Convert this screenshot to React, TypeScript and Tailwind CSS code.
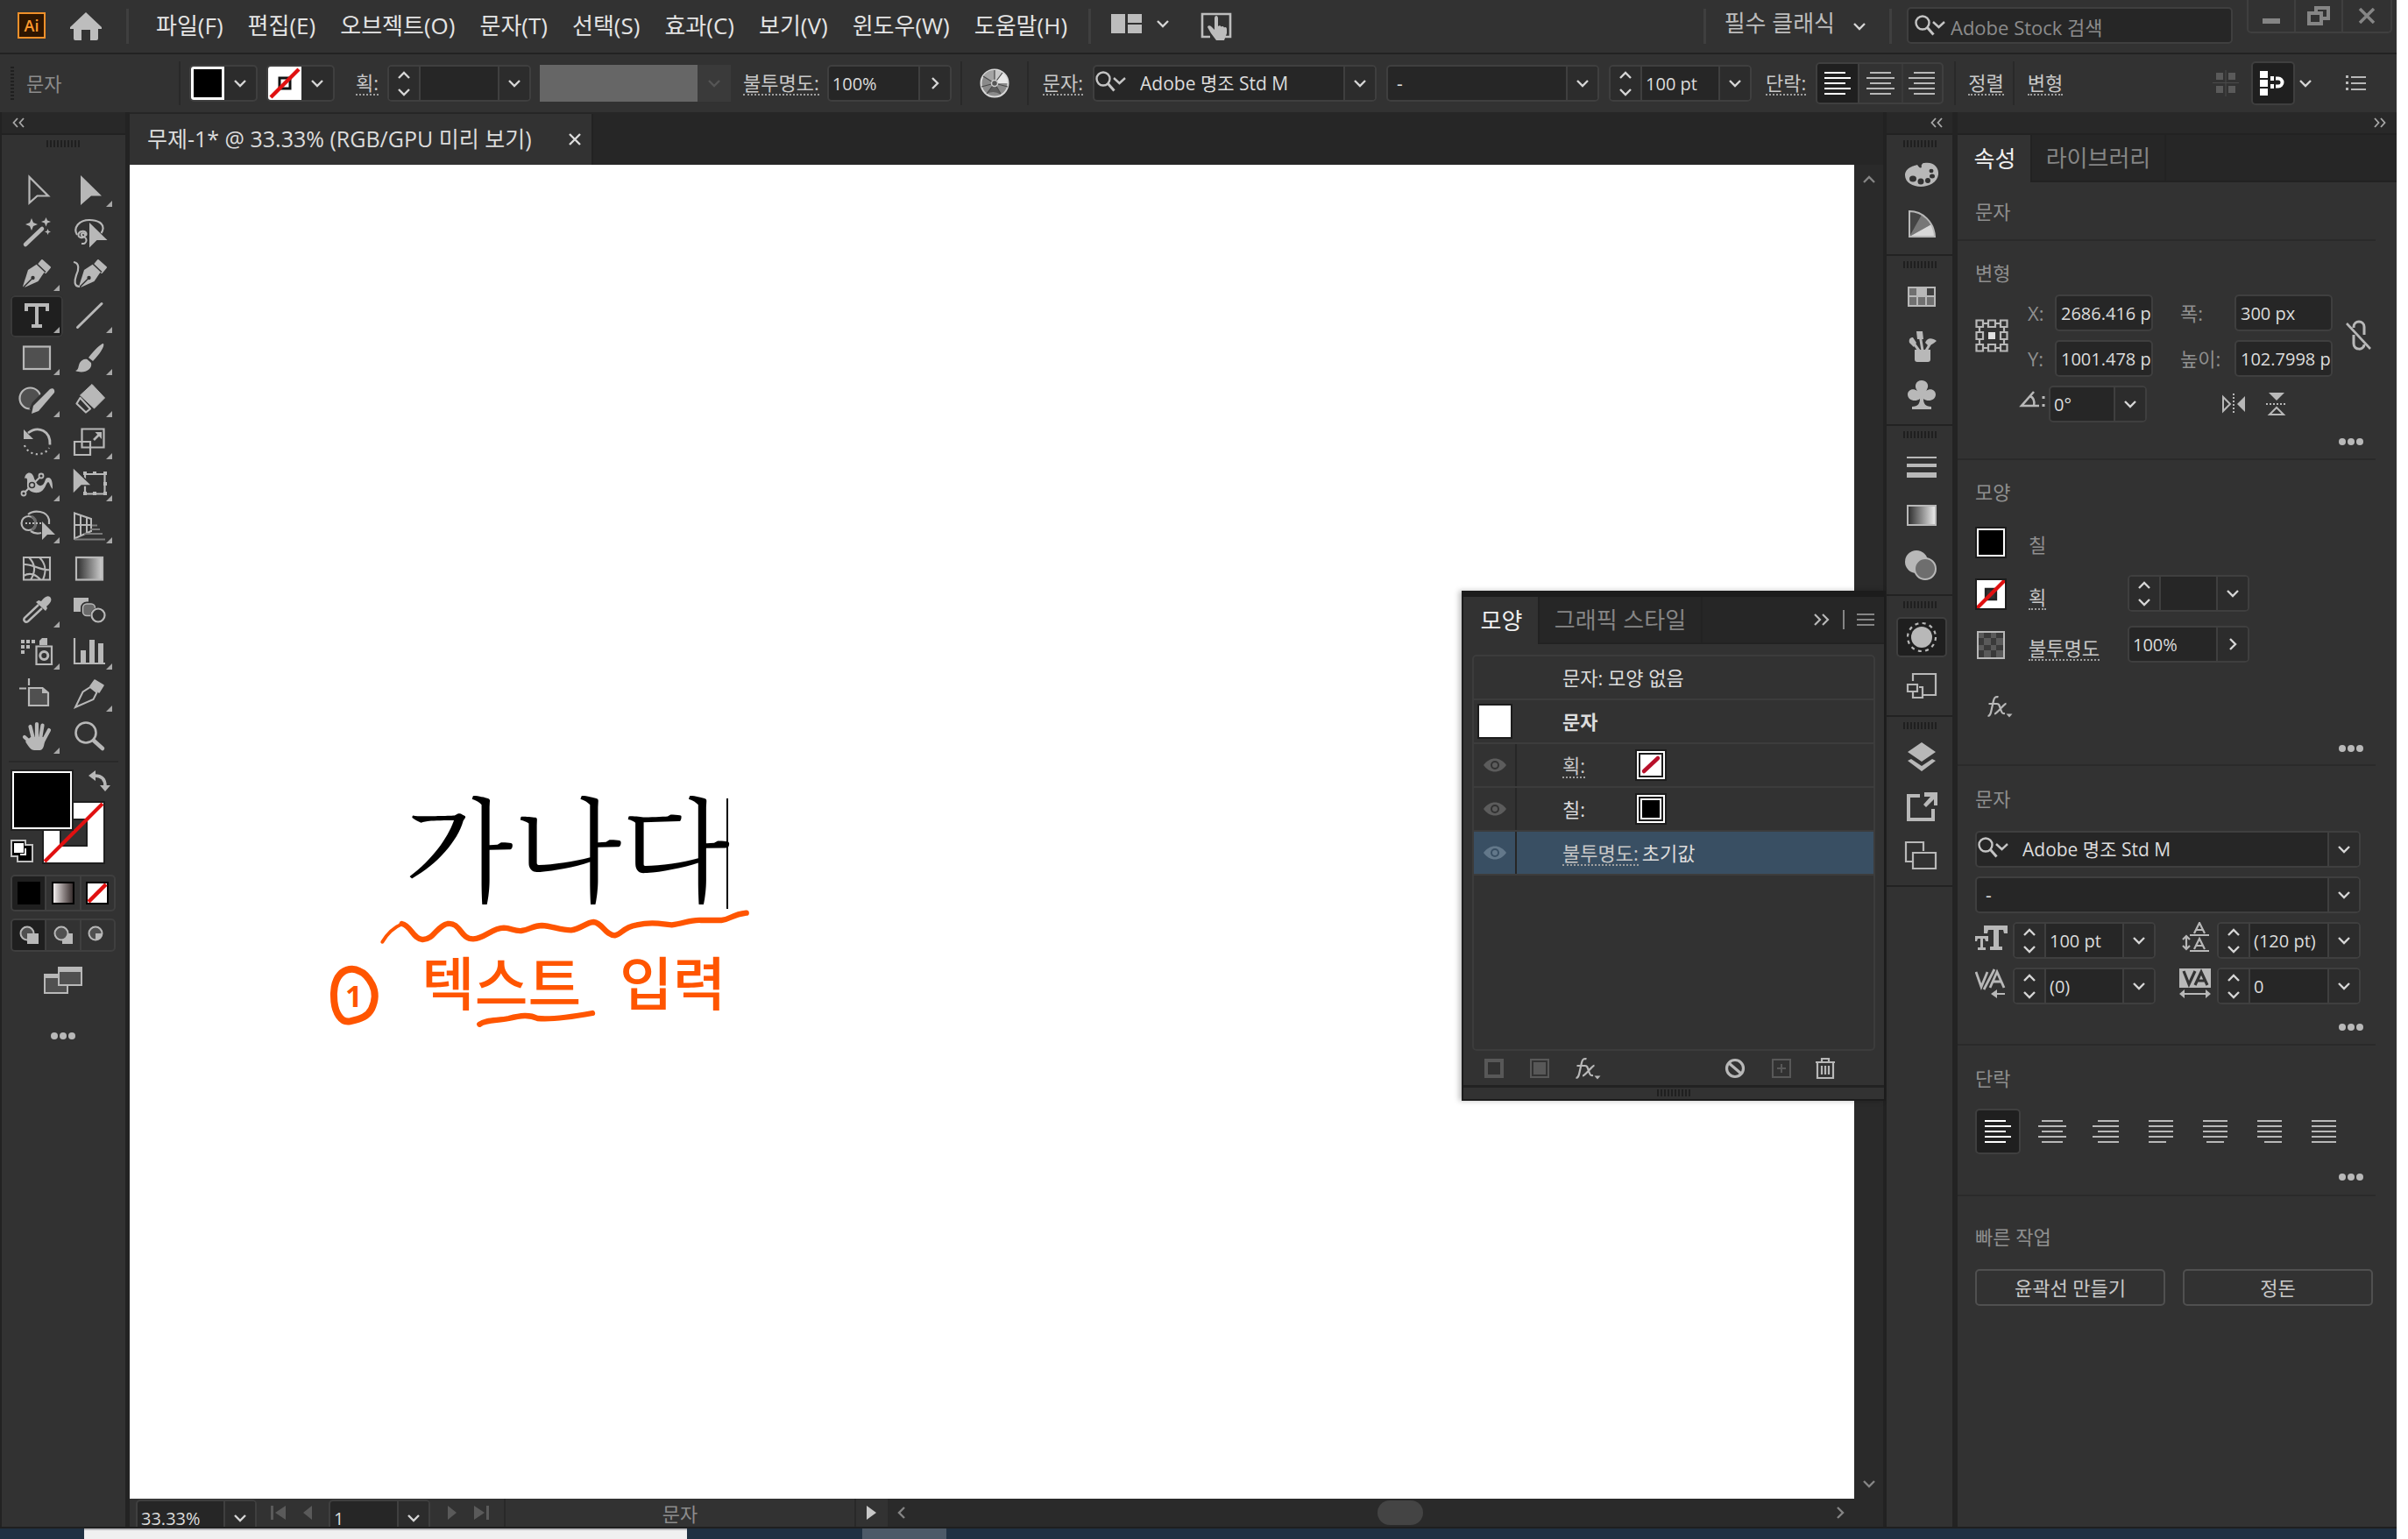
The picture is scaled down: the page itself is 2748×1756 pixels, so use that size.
import React from "react";

const I = "#b8b8b8";

/* ---------- small drawings ---------- */

function Chevron({ dir = "down", color = "#d6d6d6", size = 16 }: { dir?: "down" | "up" | "right" | "left"; color?: string; size?: number }) {
  const d = {
    down: "M2 5l6 6 6-6",
    up: "M2 11l6-6 6 6",
    right: "M5 2l6 6-6 6",
    left: "M11 2l-6 6 6 6",
  }[dir];
  return (
    <svg width={size} height={size} viewBox="0 0 16 16" fill="none" stroke={color} strokeWidth="2.4" aria-hidden="true">
      <path d={d} />
    </svg>
  );
}

function DoubleChevron({ dir }: { dir: "left" | "right" }) {
  return (
    <svg width="14" height="12" viewBox="0 0 14 12" fill="none" stroke="#a8a8a8" strokeWidth="1.8" aria-hidden="true">
      <path d={dir === "left" ? "M6 1L1.500 6 6 11M13 1L8.500 6 13 11" : "M1 1l4.500 5L1 11M8 1l4.500 5L8 11"} />
    </svg>
  );
}

function Grip() {
  return <div className="h-2 w-[38px] bg-[repeating-linear-gradient(90deg,#1f1f1f_0_2px,#323232_2px_4px)]" />;
}

function SearchGlyph() {
  return (
    <svg width="38" height="26" viewBox="0 0 38 26" fill="none" stroke="#c4c4c4" strokeWidth="2.4" aria-hidden="true">
      <circle cx="10" cy="10" r="7.500" />
      <path d="M15.500 15.500l7 8" strokeWidth="3" />
      <path d="M22 9l6.500 6 6.500-6" />
    </svg>
  );
}

function Dots() {
  return (
    <svg width="30" height="10" viewBox="0 0 30 10" fill={I} aria-hidden="true">
      <circle cx="5" cy="5" r="4" />
      <circle cx="15" cy="5" r="4" />
      <circle cx="25" cy="5" r="4" />
    </svg>
  );
}

function FxIcon() {
  return (
    <svg width="32" height="28" viewBox="0 0 32 28" fill="none" stroke={I} strokeWidth="2.2" aria-hidden="true">
      <path d="M2.500 25c2.500 0 3-2 3.800-5.500L9 7.500C9.800 4 11 2.500 14.500 3.200M3.500 11h9.500" />
      <path d="M12.500 11c3 0 3 1.500 4.500 6s2 5.500 5 5M23.500 10.800c-3 0-10 11.700-13.500 11.700" />
      <path d="M23.500 22.500h7l-3.500 4z" fill={I} stroke="none" />
    </svg>
  );
}

function NoneSwatch() {
  return (
    <svg width="38" height="38" viewBox="0 0 38 38" aria-hidden="true">
      <path d="M0 0h38v38H0z" fill="#fff" />
      <path d="M13 13h12v12H13z" fill="#fff" stroke="#111" strokeWidth="3" />
      <path d="M3 35L35 3" stroke="#e01010" strokeWidth="4.500" />
    </svg>
  );
}

type AlignKind = "left" | "center" | "right" | "jleft" | "jcenter" | "jright" | "jall";
const alignLines: Record<AlignKind, number[][]> = {
  left: [[1, 24], [1, 30], [1, 24], [1, 30], [1, 24]],
  center: [[4, 24], [0, 32], [4, 24], [0, 32], [4, 24]],
  right: [[6, 24], [0, 30], [6, 24], [0, 30], [6, 24]],
  jleft: [[2, 28], [2, 28], [2, 28], [2, 28], [2, 20]],
  jcenter: [[2, 28], [2, 28], [2, 28], [2, 28], [6, 20]],
  jright: [[2, 28], [2, 28], [2, 28], [2, 28], [10, 20]],
  jall: [[2, 28], [2, 28], [2, 28], [2, 28], [2, 28]],
};
function AlignIcon({ kind, color = I }: { kind: AlignKind; color?: string }) {
  return (
    <svg width="32" height="28" viewBox="0 0 32 28" fill={color} aria-hidden="true">
      {alignLines[kind].map(([x, w], i) => (
        <rect key={i} x={x} y={1 + i * 6} width={w} height="2" />
      ))}
    </svg>
  );
}

/* ---------- shared controls ---------- */

const boxBase = "flex h-[42px] overflow-hidden rounded-[5px] border-2 border-[#3f3f3f] bg-[#262626]";
const cell = "flex w-[36px] shrink-0 items-center justify-center bg-[#2c2c2c]";

function Combo({ label, value = "", width, stepper = false, arrow = "down" }: { label: string; value?: string; width: string; stepper?: boolean; arrow?: "down" | "right" }) {
  return (
    <div className={`${boxBase} ${width}`}>
      {stepper && (
        <div className="flex w-[36px] shrink-0 flex-col border-r-2 border-[#3f3f3f] bg-[#2c2c2c]">
          <button aria-label={`${label} +`} className="flex flex-1 items-center justify-center">
            <Chevron dir="up" />
          </button>
          <button aria-label={`${label} -`} className="flex flex-1 items-center justify-center">
            <Chevron />
          </button>
        </div>
      )}
      <input aria-label={label} defaultValue={value} className="min-w-0 flex-1 bg-transparent px-1 pt-0.5 text-[20px] text-[#dcdcdc] outline-none" />
      <button aria-label={`${label} ▾`} className={`${cell} border-l-2 border-[#3f3f3f]`}>
        <Chevron dir={arrow} />
      </button>
    </div>
  );
}

function SelectBox({ label, value, width, search = false }: { label: string; value: string; width: string; search?: boolean }) {
  return (
    <div className={`relative ${boxBase} ${width}`}>
      {search && (
        <div className="flex w-[42px] shrink-0 items-center pb-1">
          <SearchGlyph />
        </div>
      )}
      <select aria-label={label} className="min-w-0 flex-1 appearance-none bg-transparent pl-2.5 pt-0.5 text-[21px] text-[#dcdcdc] outline-none">
        <option>{value}</option>
      </select>
      <div className={`${cell} pointer-events-none border-l-2 border-[#3f3f3f]`}>
        <Chevron />
      </div>
    </div>
  );
}

function LinkLabel({ children }: { children: React.ReactNode }) {
  return <button className="shrink-0 border-b-2 border-dotted border-[#a0a0a0] text-[22px] leading-[26px] text-[#c8c8c8]">{children}</button>;
}

const VLine = ({ className = "" }: { className?: string }) => <div className={`h-[50px] w-[2px] shrink-0 bg-[#292929] ${className}`} />;

/* ---------- menu bar ---------- */

const menus = ["파일(F)", "편집(E)", "오브젝트(O)", "문자(T)", "선택(S)", "효과(C)", "보기(V)", "윈도우(W)", "도움말(H)"];

function MenuBar() {
  return (
    <header className="flex h-[62px] shrink-0 border-b-2 border-[#222] pl-5 text-[26px]">
      <div className="mt-[14px] flex h-[30px] w-8 items-center justify-center border-2 border-[#f0902a] bg-[#2e1500] text-[18px] font-semibold text-[#ff9a2e]">Ai</div>
      <button aria-label="홈" className="ml-7 flex h-[60px] items-center">
        <svg width="36" height="32" viewBox="0 0 36 32" fill="#bdbdbd" aria-hidden="true">
          <path d="M18 0L0 17v2h4v11a2 2 0 002 2h7V20h10v12h7a2 2 0 002-2V19h4v-2z" />
        </svg>
      </button>
      <div className="ml-7 mt-2.5 h-10 w-[3px] bg-[#3f3f3f]" />
      <nav className="ml-[31px] flex items-center gap-[28px] pb-0.5 text-[#e4e4e4]">
        {menus.map((m) => (
          <button key={m} className="whitespace-nowrap">{m}</button>
        ))}
      </nav>
      <div className="ml-6 mt-2.5 h-10 w-[3px] bg-[#3f3f3f]" />
      <button aria-label="문서 정렬" className="ml-[23px] flex h-[54px] items-center gap-4">
        <svg width="35" height="22" viewBox="0 0 35 22" fill="#bdbdbd" aria-hidden="true">
          <path d="M0 0h16v22H0zM19 0h16v10H19zM19 12h16v10H19z" />
        </svg>
        <Chevron />
      </button>
      <button aria-label="터치 작업 영역" className="ml-[34px] flex h-[60px] items-center">
        <svg width="38" height="32" viewBox="0 0 38 32" aria-hidden="true">
          <path d="M12 28H3V2h32v26h-7" fill="none" stroke="#bdbdbd" strokeWidth="2.600" />
          <path d="M17 7c0-4 4-4 4 0v9c1-1 3-1 3.500.5 1.500-1 3-.5 3.500 1 2-1 3 0 3 2V24l-3 8h-9l-6-8-4-7c0-2 3-2 4-1l4 4z" fill="#bdbdbd" />
        </svg>
      </button>
      <div className="flex-1" />
      <div className="mt-2.5 h-10 w-[3px] bg-[#3f3f3f]" />
      <button className="ml-[21px] flex h-[52px] items-center gap-5 text-[26px] text-[#bdbdbd]">
        필수 클래식
        <span className="pt-2"><Chevron /></span>
      </button>
      <div className="ml-[26px] mt-2.5 h-10 w-[3px] bg-[#3f3f3f]" />
      <label className="ml-[17px] mt-2 flex h-[42px] w-[372px] items-center rounded-[5px] border-2 border-[#3f3f3f] bg-[#262626] pl-1.5">
        <SearchGlyph />
        <input aria-label="Adobe Stock 검색" placeholder="Adobe Stock 검색" className="min-w-0 flex-1 bg-transparent pl-1 pt-1 text-[22px] outline-none placeholder:text-[#8c8c8c]" />
      </label>
      <div className="ml-4 mr-[5px] flex h-[38px] rounded-b-[5px] border-2 border-t-0 border-[#3f3f3f]">
        <button aria-label="최소화" className="flex w-[54px] items-center justify-center border-r-2 border-[#3f3f3f] pt-3">
          <div className="h-[6px] w-5 bg-[#858585]" />
        </button>
        <button aria-label="복원" className="flex w-[54px] items-center justify-center border-r-2 border-[#3f3f3f]">
          <svg width="26" height="22" viewBox="0 0 26 22" fill="none" stroke="#858585" strokeWidth="4" aria-hidden="true">
            <path d="M10 6V2h14v12h-6M2 8h14v12H2z" />
          </svg>
        </button>
        <button aria-label="닫기" className="flex w-[54px] items-center justify-center">
          <svg width="20" height="18" viewBox="0 0 20 18" stroke="#858585" strokeWidth="3.500" aria-hidden="true">
            <path d="M2 1l16 16M18 1L2 17" />
          </svg>
        </button>
      </div>
    </header>
  );
}

/* ---------- control bar ---------- */

function ControlBar() {
  const dd = "flex w-[36px] items-center justify-center";
  return (
    <div className="flex h-[66px] shrink-0 items-center pl-3">
      <div className="h-[38px] w-1 bg-[repeating-linear-gradient(180deg,#1f1f1f_0_2px,#323232_2px_4px)]" />
      <span className="ml-[14px] w-[174px] shrink-0 text-[22px] text-[#8c8c8c]">문자</span>
      <VLine />
      <button aria-label="칠" className="ml-2.5 flex h-[42px] w-[78px] shrink-0 overflow-hidden rounded-[5px] border-2 border-[#3f3f3f] bg-[#2c2c2c]">
        <div className="h-full w-[38px] border-[3px] border-white bg-black" />
        <span className={dd + " h-full"}><Chevron /></span>
      </button>
      <button aria-label="획" className="ml-2.5 flex h-[42px] w-[78px] shrink-0 overflow-hidden rounded-[5px] border-2 border-[#3f3f3f] bg-[#2c2c2c]">
        <NoneSwatch />
        <span className={dd + " h-full"}><Chevron /></span>
      </button>
      <div className="ml-6 flex items-center gap-[10px]">
        <LinkLabel>획:</LinkLabel>
        <Combo label="획 두께" width="w-[164px]" stepper />
      </div>
      <div className="ml-2.5 h-[42px] w-[180px] shrink-0 bg-[#666]" />
      <div className="mr-[14px] flex h-[42px] w-[38px] shrink-0 items-center justify-center bg-[#3a3a3a]">
        <Chevron color="#555" />
      </div>
      <div className="flex items-center gap-[9px]">
        <LinkLabel>불투명도:</LinkLabel>
        <Combo label="불투명도" value="100%" width="w-[142px]" arrow="right" />
      </div>
      <VLine className="ml-2.5" />
      <button aria-label="아트웍 색상 변경" className="mx-5 shrink-0">
        <svg width="34" height="34" viewBox="0 0 34 34" aria-hidden="true">
          <circle cx="17" cy="17" r="15.500" fill="#8a8a8a" stroke="#d8d8d8" strokeWidth="2" />
          <path d="M17 17V2a15 15 0 019 3z" fill="#c8c8c8" />
          <path d="M17 17l9-12a15 15 0 016 12z" fill="#e6e6e6" />
          <path d="M17 17L4 9A15 15 0 0117 2z" fill="#a4a4a4" />
          <path d="M17 17L24 30A15 15 0 008 29z" fill="#5c5c5c" />
          <path d="M17 2v15L8 29M17 17l7 12M17 17L4 9M17 17l15 4M17 17L2 21M17 17l9-12" stroke="#4a4a4a" strokeWidth="1.200" fill="none" />
          <circle cx="17" cy="17" r="3.500" fill="#555" stroke="#ccc" strokeWidth="1.500" />
        </svg>
      </button>
      <VLine />
      <div className="ml-4 flex items-center gap-[11px]">
        <LinkLabel>문자:</LinkLabel>
        <SelectBox label="글꼴" value="Adobe 명조 Std M" width="w-[324px]" search />
        <SelectBox label="글꼴 스타일" value="-" width="w-[243px]" />
        <Combo label="글꼴 크기" value="100 pt" width="w-[163px]" stepper />
      </div>
      <div className="ml-4 flex items-center gap-[11px]">
        <LinkLabel>단락:</LinkLabel>
        <div className="flex h-[48px] overflow-hidden rounded-[5px] border-2 border-[#3f3f3f]">
          <button aria-label="왼쪽 정렬" className="flex w-12 items-center justify-center border-r-2 border-[#3f3f3f] bg-[#1f1f1f]"><AlignIcon kind="left" color="#fff" /></button>
          <button aria-label="가운데 정렬" className="flex w-[50px] items-center justify-center border-r-2 border-[#3a3a3a]"><AlignIcon kind="center" /></button>
          <button aria-label="오른쪽 정렬" className="flex w-11 items-center justify-center"><AlignIcon kind="right" /></button>
        </div>
      </div>
      <VLine className="ml-3 mr-[14px]" />
      <LinkLabel>정렬</LinkLabel>
      <VLine className="ml-2.5 mr-[15px]" />
      <LinkLabel>변형</LinkLabel>
      <div className="flex-1" />
      <svg width="30" height="30" viewBox="0 0 30 30" fill="#5a5a5a" aria-hidden="true">
        <path d="M4 3h8v8H4zM18 3h8v8h-8zM4 18h8v8H4zM18 18h8v8h-8z" />
        <path d="M14.500 0h1v30h-1zM0 14h30v1H0z" fill="#4a4a4a" />
      </svg>
      <button aria-label="픽셀에 정렬" className="ml-[14px] flex h-[50px] w-[50px] items-center justify-center rounded-[5px] border-2 border-[#3f3f3f] bg-[#1f1f1f]">
        <svg width="30" height="30" viewBox="0 0 30 30" fill="#fff" aria-hidden="true">
          <path d="M0 1h9v8H0zM0 11h9v8H0zM0 21h9v8H0zM12 7h4v5h-4zM12 16h4v5h-4z" />
          <path d="M18 9.500h3a4.500 4.500 0 010 9h-3" fill="none" stroke="#fff" strokeWidth="4" />
        </svg>
      </button>
      <button aria-label="픽셀 정렬 옵션" className="ml-1"><Chevron /></button>
      <button aria-label="패널 메뉴" className="ml-[38px] mr-[34px]">
        <svg width="24" height="18" viewBox="0 0 24 18" fill={I} aria-hidden="true">
          <path d="M0 0h3v3H0zM0 7h3v3H0zM0 14h3v3H0zM6 1h17v2H6zM6 8h17v2H6zM6 15h17v2H6z" />
        </svg>
      </button>
    </div>
  );
}

/* ---------- tools ---------- */

const penBody = (
  <>
    <path d="M14 38l6-19 10-6.500L39 21l-7.500 11L17 38.500z" fill={I} />
    <path d="M36 8l9 8-5 6-9-8z" fill={I} stroke={I} strokeWidth="2" strokeLinejoin="round" />
    <path d="M30 12l10 9.500" stroke="#323232" strokeWidth="1.600" />
    <path d="M15 38.500l9-9" stroke="#323232" strokeWidth="1.600" />
    <circle cx="25.500" cy="28" r="2.200" fill="#323232" />
  </>
);

const tools: { name: string; tri?: boolean; on?: boolean; art: React.ReactNode }[] = [
  { name: "선택", art: <path d="M21.500 9v29.500l9-8H43z" fill="none" stroke={I} strokeWidth="2.200" /> },
  { name: "직접 선택", tri: true, art: <path d="M20 7v34l12-10.500h12z" fill={I} /> },
  {
    name: "자동 선택",
    art: (
      <>
        <path d="M17 38l19-18" stroke={I} strokeWidth="4.500" strokeLinecap="round" />
        <path d="M24 8l2 5 5 2-5 2-2 5-2-5-5-2 5-2zM40.500 7l1.500 3.500 4 1.500-4 1.500-1.500 4-1.500-4-4-1.500 4-1.500zM42.500 20l1 2.500 2.500 1-2.500 1-1 2.500-1-2.500-2.500-1 2.500-1z" fill={I} />
      </>
    ),
  },
  {
    name: "올가미",
    art: (
      <>
        <path d="M16 27c-5-8 2-17 14-17 10 0 16 4 15.500 10-.2 2-.8 3.500-2 5" fill="none" stroke={I} strokeWidth="2.200" />
        <path d="M26 28c2-4-2-6-5-5-4 1-5 6-1 7 5 1 7-4 3-5-3 0-3 3 0 4 5 1 5 9-2 8" fill="none" stroke={I} strokeWidth="2" />
        <path d="M30 13v28.500l8.500-8.500h12z" fill={I} />
      </>
    ),
  },
  { name: "펜", tri: true, art: penBody },
  {
    name: "곡률",
    art: (
      <>
        <g transform="translate(4 0)">{penBody}</g>
        <path d="M12 10c7 1 6 9 3 15-2 6-3 13 4 13" fill="none" stroke={I} strokeWidth="2.200" />
      </>
    ),
  },
  {
    name: "문자",
    tri: true,
    on: true,
    art: <path d="M16 9h28v9h-4v-5h-8v20h4v4H24v-4h4V13h-8v5h-4z" fill={I} />,
  },
  { name: "선분", tri: true, art: <path d="M16.500 36.500L44 9.500" stroke={I} strokeWidth="3" strokeLinecap="round" /> },
  { name: "사각형", tri: true, art: <rect x="15" y="10.500" width="30" height="25.500" fill="#505050" stroke={I} strokeWidth="2.200" /> },
  {
    name: "페인트브러쉬",
    tri: true,
    art: <path d="M46 7c2 3-5 13-12 20l-5-4C35 15 43 7 46 7zM27.500 25l4.500 4c2 8-9 13-18 9 4-1 3-5 5-9 2-3 5-5 8.500-4z" fill={I} />,
  },
  {
    name: "Shaper",
    tri: true,
    art: (
      <>
        <circle cx="22.500" cy="21.500" r="12" fill="#505050" stroke={I} strokeWidth="2.200" />
        <path d="M47 11L29 29l-3 7" stroke="#323232" strokeWidth="10" fill="none" />
        <path d="M45 11c3-2 6 0 5 4L32 36l-8 3 2-9z" fill={I} />
      </>
    ),
  },
  {
    name: "지우개",
    tri: true,
    art: (
      <>
        <path d="M33 5.500l14.500 15.500-12 12L19.500 18z" fill={I} stroke={I} strokeLinejoin="round" />
        <path d="M19.500 21l-4 6.500L26 37.500l5-4z" fill="none" stroke={I} strokeWidth="2.200" strokeLinejoin="round" />
      </>
    ),
  },
  {
    name: "회전",
    tri: true,
    art: (
      <>
        <path d="M20 13c12-9 26-2 25 13.500" fill="none" stroke={I} strokeWidth="2.800" />
        <path d="M15 9v11h11z" fill={I} />
        <path d="M16 27c4 12 22 14 28 3" fill="none" stroke={I} strokeWidth="2.200" strokeDasharray="2.200 3.500" />
      </>
    ),
  },
  {
    name: "크기 조절",
    tri: true,
    art: (
      <>
        <path d="M21.500 8.500h25v21h-25zM13 23h18v15H13z" fill="none" stroke={I} strokeWidth="2.200" />
        <path d="M35 21l7-7" stroke={I} strokeWidth="2.600" />
        <path d="M36.500 12H44v8z" fill={I} />
      </>
    ),
  },
  {
    name: "폭",
    tri: true,
    art: (
      <>
        <path d="M16 17c1-8 9-9 11 0 3 7 6 10 10 7 3-3 2-8 6-8 5 0 5 8 5 13-3-3-3-7-5-8-3 1-3 10-11 12-7 1-14-3-13-9 0-4 1-9-3-7z" fill={I} />
        <path d="M15 34l20-20" stroke={I} strokeWidth="2.200" />
        <circle cx="15" cy="34" r="2.500" fill="#323232" stroke={I} strokeWidth="1.800" />
        <circle cx="35" cy="14" r="2.500" fill="#323232" stroke={I} strokeWidth="1.800" />
        <circle cx="24.500" cy="24.500" r="3" fill={I} stroke="#323232" strokeWidth="1.500" />
      </>
    ),
  },
  {
    name: "자유 변형",
    tri: true,
    art: (
      <>
        <path d="M25 12h22.500v22.500H25z" fill="none" stroke={I} strokeWidth="2.200" />
        <path d="M23 9h4v4h-4zM34 9h4v4h-4zM46 9h4v4h-4zM46 21h4v4h-4zM46 32h4v4h-4zM34 32h4v4h-4zM23 32h4v4h-4z" fill={I} />
        <path d="M11 4v31l10-10h12z" fill={I} stroke="#323232" strokeWidth="1.500" />
      </>
    ),
  },
  {
    name: "도형 구성",
    tri: true,
    art: (
      <>
        <circle cx="20.500" cy="20" r="8" fill="none" stroke={I} strokeWidth="2.200" />
        <path d="M20 10c7-6 22-4 24 6v5M23 29c4 3 8 3 12 2" fill="none" stroke={I} strokeWidth="2.200" />
        <path d="M24 12a9 9 0 010 16" fill="none" stroke="#6a6a6a" strokeWidth="3" />
        <path d="M17 20h18" stroke={I} strokeWidth="2" strokeDasharray="2 2" />
        <path d="M36 18v21l6-6h9z" fill={I} />
      </>
    ),
  },
  {
    name: "원근감 격자",
    tri: true,
    art: (
      <>
        <path d="M13 8.500L32 15v14L13 37.500zM13 22h19M20 11v23M27 13.500v18" fill="none" stroke={I} strokeWidth="2" />
        <path d="M33 22.500h6M31 27h11M24 32h21M13 38.500h35" stroke="#7a7a7a" strokeWidth="2" />
      </>
    ),
  },
  {
    name: "망",
    art: (
      <path d="M15 11h30v25.500H15zM15 19c10-1 20 8 30 6M15 32c8-5 14-1 19 4M21 11c8 8 8 16 2 25.500M33 11c8 8 8 16 4 25.500" fill="none" stroke={I} strokeWidth="2.100" />
    ),
  },
  {
    name: "그레이디언트",
    art: (
      <>
        <defs>
          <linearGradient id="toolGrad">
            <stop offset="0" stopColor="#2a2a2a" />
            <stop offset="1" stopColor="#d0d0d0" />
          </linearGradient>
        </defs>
        <rect x="15" y="11" width="30" height="25.500" fill="url(#toolGrad)" stroke={I} strokeWidth="2.200" />
      </>
    ),
  },
  {
    name: "스포이드",
    tri: true,
    art: (
      <>
        <path d="M32 17L16 32c-2 3 1 6 4 4l16-15" fill="none" stroke={I} strokeWidth="2.400" />
        <path d="M29 14l3-2 3 1c4-5 7-7 10-5 3 3 1 7-4 11l1 2-2 3z" fill={I} />
      </>
    ),
  },
  {
    name: "블렌드",
    art: (
      <>
        <path d="M12 9h17v16H12z" fill={I} />
        <rect x="22" y="15.500" width="15" height="14.500" rx="5" fill="#6a6a6a" stroke="#323232" strokeWidth="4" />
        <rect x="22.500" y="16" width="14" height="13.500" rx="4.500" fill="#6a6a6a" stroke={I} strokeWidth="1.500" />
        <circle cx="40" cy="29" r="9" fill="#323232" />
        <circle cx="40" cy="29" r="7.500" fill="#323232" stroke={I} strokeWidth="2.200" />
      </>
    ),
  },
  {
    name: "심볼 분무기",
    tri: true,
    art: (
      <>
        <path d="M12 9h4v4h-4zM18 9h4v4h-4zM24 9h4v4h-4zM12 15h4v4h-4zM18 15h4v4h-4zM12 21h4v4h-4zM33 10l3-3h6v8h-9z" fill={I} />
        <path d="M29.500 16.500h17.500V37H29.500z" fill="none" stroke={I} strokeWidth="2.200" />
        <circle cx="38.300" cy="27" r="4.500" fill="none" stroke={I} strokeWidth="3" />
      </>
    ),
  },
  {
    name: "막대 그래프",
    tri: true,
    art: (
      <>
        <path d="M13 7v29h35" fill="none" stroke={I} strokeWidth="2.200" />
        <path d="M20 21h6v15h-6zM30 9h6v27h-6zM40 13h6v23h-6z" fill={I} />
      </>
    ),
  },
  {
    name: "대지",
    art: (
      <>
        <path d="M21 5v8M10 16.500h8" stroke={I} strokeWidth="2.200" />
        <path d="M21 16h15.500l6.500 5.500v14.500H21z" fill="#505050" stroke={I} strokeWidth="2.200" />
        <path d="M36 15v7h8z" fill={I} />
      </>
    ),
  },
  {
    name: "분할 영역",
    tri: true,
    art: (
      <>
        <path d="M36 7l10 6-5 8-10-7z" fill={I} stroke={I} strokeWidth="1.500" strokeLinejoin="round" />
        <path d="M14 38l8.500-17.500L31 15l7.500 6-4 8z" fill="none" stroke={I} strokeWidth="2" />
      </>
    ),
  },
  {
    name: "손",
    tri: true,
    art: (
      <>
        <path d="M26 26l-3.500-14M30 25V9M34 26l2.500-15.500M37 29l7-13M25 32l-9-8" stroke={I} strokeWidth="4.200" strokeLinecap="round" />
        <path d="M23 24h14l3 1-2 9c-1 4-3 5-5 5h-6c-3 0-6-3-10-10z" fill={I} />
      </>
    ),
  },
  {
    name: "돋보기",
    art: (
      <>
        <circle cx="26" cy="19" r="11.500" fill="none" stroke={I} strokeWidth="2.600" />
        <path d="M35 28l10 9" stroke={I} strokeWidth="4.500" strokeLinecap="round" />
      </>
    ),
  },
];

const modeCell = "flex w-[40px] items-center justify-center border-r-2 border-[#3f3f3f]";

function ToolPanel() {
  return (
    <aside className="flex w-[143px] shrink-0 flex-col border-l-2 border-[#222]">
      <div className="flex h-[26px] items-center border-b-2 border-[#222] bg-[#282828] pl-3">
        <DoubleChevron dir="left" />
      </div>
      <div className="flex h-[39px] justify-center pr-0.5 pt-[6px]">
        <Grip />
      </div>
      <div className="ml-2.5 grid w-[120px] grid-cols-2">
        {tools.map((t) => (
          <button key={t.name} aria-label={t.name} className={t.on ? "h-12 rounded-[5px] bg-[#1f1f1f] ring-2 ring-[#3a3a3a] ring-inset" : "h-12"}>
            <svg width="60" height="48" viewBox="0 0 60 48" aria-hidden="true">
              {t.art}
              {t.tri && <path d="M56 36v7h-7z" fill="#a8a8a8" />}
            </svg>
          </button>
        ))}
      </div>
      <div className="mx-2 mt-[3px] h-[2px] bg-[#292929]" />
      <div className="relative mt-2 ml-2.5 h-[112px] w-[122px]">
        <button aria-label="획 색상" className="absolute left-9 top-9">
          <svg width="72" height="72" viewBox="0 0 72 72" aria-hidden="true">
            <path d="M1 1h70v70H1z" fill="#fff" stroke="#1f1f1f" strokeWidth="2" />
            <path d="M21 21h30v30H21z" fill="#323232" stroke="#1f1f1f" strokeWidth="2" />
            <path d="M3 69L69 3" stroke="#e01010" strokeWidth="4" />
          </svg>
        </button>
        <button aria-label="칠 색상" className="absolute left-0 top-0 h-[70px] w-[72px] border-2 border-[#1f1f1f] bg-black ring-2 ring-white ring-inset" />
        <button aria-label="칠과 획 교체" className="absolute left-[88px] top-0">
          <svg width="26" height="26" viewBox="0 0 26 26" aria-hidden="true">
            <path d="M8 7c8 0 12 4 12 12" fill="none" stroke={I} strokeWidth="3.500" />
            <path d="M1 7l8-6v12zM14 18h12l-6 7z" fill={I} />
          </svg>
        </button>
        <button aria-label="초기값 칠과 획" className="absolute left-0 top-20">
          <svg width="26" height="26" viewBox="0 0 26 26" aria-hidden="true">
            <path d="M1 1h16v5h8v19H8v-6H1z" fill="#000" stroke="#c0c0c0" strokeWidth="2" />
            <path d="M4 4h11v11H4z" fill="#fff" />
            <path d="M17 10v7h-6" fill="none" stroke="#fff" strokeWidth="2" />
          </svg>
        </button>
      </div>
      <div className="ml-2.5 mt-2 flex h-[42px] w-[120px] overflow-hidden rounded-[5px] border-2 border-[#3f3f3f]">
        <button aria-label="색상" className={`${modeCell} bg-[#1f1f1f]`}><div className="h-[26px] w-[26px] bg-black" /></button>
        <button aria-label="그레이디언트 칠" className={modeCell}><div className="h-[26px] w-[26px] border-2 border-black bg-linear-to-r from-[#f4f0f0] to-[#3a3030]" /></button>
        <button aria-label="없음" className="flex w-[38px] items-center justify-center">
          <svg width="26" height="26" viewBox="0 0 26 26" aria-hidden="true">
            <path d="M1 1h24v24H1z" fill="#fff" stroke="#000" strokeWidth="2" />
            <path d="M3 23L23 3" stroke="#e01010" strokeWidth="4.500" />
          </svg>
        </button>
      </div>
      <div className="ml-2.5 mt-2 flex h-[38px] w-[120px] overflow-hidden rounded-[5px] border-2 border-[#3f3f3f]">
        {["표준 그리기", "배경 그리기", "내부 그리기"].map((n, i) => (
          <button key={n} aria-label={n} className={i === 0 ? `${modeCell} bg-[#1f1f1f]` : i === 1 ? modeCell : "flex w-[38px] items-center justify-center"}>
            <svg width="24" height="22" viewBox="0 0 24 22" aria-hidden="true">
              {i === 1 && <path d="M11 9h12v12H11z" fill={I} />}
              <circle cx="10" cy="9" r="7.500" fill="#505050" stroke={I} strokeWidth="2" />
              {i === 0 && <path d="M10 9h13v12H10z" fill={I} />}
              {i === 2 && <path d="M10 9h7.500a8 8 0 01-7.500 8z" fill={I} />}
            </svg>
          </button>
        ))}
      </div>
      <button aria-label="화면 모드" className="ml-12 mt-4 self-start">
        <svg width="44" height="32" viewBox="0 0 44 32" aria-hidden="true">
          <path d="M1 10h26v21H1z" fill="#505050" stroke={I} strokeWidth="2" />
          <path d="M1 9h17v5H1z" fill={I} />
          <path d="M17 2h26v20H17z" fill="#505050" stroke={I} strokeWidth="2" />
          <path d="M16 1h28v6H16z" fill={I} />
        </svg>
      </button>
      <button aria-label="도구 모음 편집" className="ml-[55px] mt-[43px] flex self-start">
        <Dots />
      </button>
    </aside>
  );
}

/* ---------- document ---------- */

function AppearancePanel() {
  const eye = (fill: string, hole: string) => (
    <svg width="26" height="16" viewBox="0 0 26 16" aria-hidden="true">
      <path d="M0 8C7-2 19-2 26 8 19 18 7 18 0 8z" fill={fill} />
      <circle cx="13" cy="8" r="5" fill={hole} />
      <circle cx="13" cy="8" r="3" fill={fill} />
    </svg>
  );
  const row = "flex h-[50px] items-center border-b-2 border-[#3c3c3c] text-[22px]";
  const eyeCell = "flex h-full w-[49px] shrink-0 items-center justify-center border-r-2 border-[#262626]";
  return (
    <section className="absolute -right-[3px] top-[546px] flex h-[582px] w-[484px] flex-col border-2 border-t-[7px] border-[#1c1c1c] bg-[#323232] shadow-[-3px_0_6px_rgba(0,0,0,0.25)]">
      <div className="flex h-[54px] shrink-0 bg-[#262626] text-[26px]">
        <button className="w-[85px] bg-[#323232] pl-0.5 text-[#f0f0f0]">모양</button>
        <button className="w-[188px] border-x-2 border-b-2 border-[#222] text-[#858585]">그래픽 스타일</button>
        <div className="flex flex-1 items-center justify-end gap-[14px] border-b-2 border-[#222] pr-[11px]">
          <button aria-label="패널 축소">
            <svg width="20" height="14" viewBox="0 0 20 14" fill="none" stroke={I} strokeWidth="2.200" aria-hidden="true">
              <path d="M2 1l6 6-6 6M11 1l6 6-6 6" />
            </svg>
          </button>
          <div className="h-[22px] w-[2px] bg-[#858585]" />
          <button aria-label="모양 패널 메뉴">
            <svg width="20" height="16" viewBox="0 0 20 16" stroke="#858585" strokeWidth="2" aria-hidden="true">
              <path d="M0 2h20M0 8h20M0 14h20" />
            </svg>
          </button>
        </div>
      </div>
      <div className="mx-2.5 mt-3 flex-1 overflow-hidden rounded-[5px] border-2 border-[#3c3c3c] text-[#dcdcdc]">
        <div className={row}><span className="pl-[101px]">문자: 모양 없음</span></div>
        <div className={`${row} font-bold`}>
          <div className="ml-1 h-10 w-10 border-2 border-[#1c1c1c] bg-white" />
          <span className="pl-[57px]">문자</span>
        </div>
        <div className={row}>
          <button aria-label="획 표시" className={eyeCell}>{eye("#5c5c5c", "#323232")}</button>
          <span className="w-[83px] pl-[52px]"><LinkLabel>획:</LinkLabel></span>
          <button aria-label="획 색상" className="ml-[52px]">
            <svg width="36" height="36" viewBox="0 0 36 36" aria-hidden="true">
              <path d="M1 1h34v34H1z" fill="#fff" stroke="#1c1c1c" strokeWidth="2" />
              <path d="M5 5h26v26H5z" fill="#fff" stroke="#1c1c1c" strokeWidth="2" />
              <path d="M10 25L26 10" stroke="#b8102a" strokeWidth="4.500" strokeLinecap="round" />
            </svg>
          </button>
        </div>
        <div className={row}>
          <button aria-label="칠 표시" className={eyeCell}>{eye("#5c5c5c", "#323232")}</button>
          <span className="w-[83px] pl-[52px] whitespace-nowrap">칠:</span>
          <button aria-label="칠 색상" className="ml-[52px]">
            <svg width="36" height="36" viewBox="0 0 36 36" aria-hidden="true">
              <path d="M1 1h34v34H1z" fill="#fff" stroke="#1c1c1c" strokeWidth="2" />
              <path d="M5 5h26v26H5z" fill="#fff" stroke="#1c1c1c" strokeWidth="2" />
              <path d="M8 8h20v20H8z" fill="#000" />
            </svg>
          </button>
        </div>
        <div className={`${row} bg-[#394f63]`}>
          <button aria-label="불투명도 표시" className={eyeCell}>{eye("#63788a", "#394f63")}</button>
          <span className="pl-[52px]"><LinkLabel>불투명도:</LinkLabel></span>
          <span className="pl-1">초기값</span>
        </div>
      </div>
      <div className="flex h-[39px] shrink-0 items-center pl-6 pr-[55px]">
        <button aria-label="새 획 추가" className="h-[22px] w-[22px] border-4 border-[#585858]" />
        <button aria-label="새 칠 추가" className="ml-[30px] h-[22px] w-[22px] border-2 border-[#585858] p-0.5"><div className="h-full bg-[#585858]" /></button>
        <button aria-label="효과 추가" className="ml-7"><FxIcon /></button>
        <div className="flex-1" />
        <button aria-label="모양 지우기">
          <svg width="24" height="24" viewBox="0 0 24 24" fill="none" stroke={I} strokeWidth="3.200" aria-hidden="true">
            <circle cx="12" cy="12" r="9.500" />
            <path d="M5 6l14 12" />
          </svg>
        </button>
        <button aria-label="선택 항목 복제" className="ml-[29px]">
          <svg width="24" height="24" viewBox="0 0 24 24" fill="none" stroke="#585858" strokeWidth="2" aria-hidden="true">
            <path d="M2 2h20v20H2zM12 7v10M7 12h10" />
          </svg>
        </button>
        <button aria-label="선택 항목 삭제" className="ml-[26px]">
          <svg width="24" height="26" viewBox="0 0 24 26" fill="none" stroke={I} strokeWidth="2.200" aria-hidden="true">
            <path d="M1 6h22M8 6V2h8v4M3 6v18h18V6M8 10v10M12 10v10M16 10v10" />
          </svg>
        </button>
      </div>
      <div className="flex h-4 shrink-0 justify-center border-t-[3px] border-[#222] pt-[2px]">
        <Grip />
      </div>
    </section>
  );
}

function Canvas() {
  const note = "absolute whitespace-nowrap font-['Noto_Sans_CJK_KR',sans-serif] text-[66px] font-medium leading-[76px] text-[#ff5500]";
  return (
    <div className="relative flex-1 overflow-hidden bg-white">
      <div className="absolute left-[314px] top-[723px] flex items-start">
        <span className="font-['Noto_Serif_CJK_KR','Noto_Sans_CJK_KR',serif] text-[128px] leading-[104px] text-black">가나다</span>
        <span className="-ml-[4px] h-[126px] w-[2px] bg-black" />
      </div>
      <svg className="absolute left-[212px] top-[672px]" width="520" height="360" viewBox="0 0 1560 1080" fill="none" stroke="#ff5500" strokeLinecap="round" strokeLinejoin="round" aria-hidden="true">
        <path d="M229 644c18-30 40-50 69-62" strokeWidth="12" />
        <path d="M296 582c30 5 38 52 70 54 38 2 50-48 86-54 46-6 42 52 88 52 42-2 62-37 105-38 25 0 35 12 60 10 30-4 40-18 70-18 35 2 65 16 100 16 35-4 50-26 77-28 33 4 38 44 73 46 25-4 25-27 75-36 50-11 80-4 120 0 40-4 60-18 100-16h70c30-2 35-20 85-25" strokeWidth="19" />
        <path d="M150 744c-20-12-48-8-66 12-20 22-24 62-20 92 4 36 22 74 54 68 40-8 62-18 74-42 14-30 14-60 2-84-10-20-22-38-44-46z" strokeWidth="24" />
        <path d="M562 926c20-16 60-12 100-20 40-10 70-14 98 0 40 4 90 0 188-18" strokeWidth="19" />
      </svg>
      <span className="absolute left-[246px] top-[926px] text-[34px] font-bold leading-[44px] text-[#ff5500]">1</span>
      <span className={`${note} left-[333px] top-[892px]`}>텍스트</span>
      <span className={`${note} left-[559px] top-[892px]`}>입력</span>
    </div>
  );
}

function StatusBar() {
  const tri = (d: string, c = "#5a5a5a") => (
    <svg width="20" height="18" viewBox="0 0 20 18" fill={c} aria-hidden="true">
      <path d={d} />
    </svg>
  );
  return (
    <footer className="flex h-[32px] shrink-0 overflow-hidden">
      <div className="flex flex-1 pl-[7px]">
        <Combo label="확대/축소" value="33.33%" width="w-[138px] mt-px" />
        <button aria-label="첫 대지" className="ml-4">{tri("M0 1h3v16H0zM17 1v16L5 9z")}</button>
        <button aria-label="이전 대지" className="ml-[14px]">{tri("M13 1v16L3 9z")}</button>
        <div className="ml-3"><Combo label="대지" value="1" width="w-[116px] mt-px" /></div>
        <button aria-label="다음 대지" className="ml-5">{tri("M0 1v16l10-8z")}</button>
        <button aria-label="마지막 대지" className="ml-2.5">{tri("M0 1v16l12-8zM14 1h3v16h-3z")}</button>
        <div className="ml-[14px] flex w-[402px] items-center justify-center border-x-2 border-[#292929] pt-0.5 text-[22px] leading-[26px] text-[#8c8c8c]">문자</div>
        <button aria-label="상태 표시 메뉴" className="ml-3 w-6">{tri("M0 1v16l11-8z", "#c8c8c8")}</button>
        <div className="flex flex-1 items-center bg-[#2a2a2a] px-2">
          <Chevron dir="left" color="#858585" />
          <div className="flex-[8]" />
          <div className="h-7 w-[52px] rounded-full bg-[#444]" />
          <div className="flex-[7]" />
          <Chevron dir="right" color="#858585" />
        </div>
      </div>
      <div className="w-[33px] bg-[#2a2a2a]" />
    </footer>
  );
}

function DocumentArea() {
  return (
    <main className="relative z-10 flex min-w-0 flex-1 flex-col">
      <div className="flex h-[60px] shrink-0 bg-[#262626]">
        <div className="mt-0.5 flex w-[529px] items-center justify-between border-r-2 border-[#222] bg-[#323232] pl-5 pr-3 text-[25px] text-[#dcdcdc]">
          <span>무제-1* @ 33.33% (RGB/GPU 미리 보기)</span>
          <button aria-label="문서 닫기">
            <svg width="14" height="14" viewBox="0 0 14 14" stroke="#dcdcdc" strokeWidth="2.400" aria-hidden="true">
              <path d="M1 1l12 12M13 1L1 13" />
            </svg>
          </button>
        </div>
      </div>
      <div className="flex min-h-0 flex-1">
        <Canvas />
        <div className="flex w-[33px] flex-col items-center justify-between bg-[#2a2a2a] py-[9px]">
          <Chevron dir="up" color="#858585" />
          <Chevron color="#858585" />
        </div>
      </div>
      <StatusBar />
      <AppearancePanel />
    </main>
  );
}

/* ---------- dock strip ---------- */

const dock: { name: string; on?: boolean; art: React.ReactNode }[][] = [
  [
    {
      name: "색상",
      art: (
        <>
          <path d="M5 17C5 8 16 6 19 5c2 3 3 4 5 3-1-3 1-5 3-5 10-2 17 5 16 13-1 9-11 14-20 14S5 25 5 17z" fill={I} />
          <g fill="#323232"><ellipse cx="14" cy="21" rx="4" ry="3.500" /><ellipse cx="23" cy="24" rx="3.500" ry="3.500" /><ellipse cx="31" cy="23" rx="3" ry="3" /><ellipse cx="36" cy="18" rx="3" ry="2.500" /><ellipse cx="35" cy="12" rx="2.500" ry="2.200" /></g>
        </>
      ),
    },
    {
      name: "색상 안내",
      art: (
        <>
          <path d="M10 2c15 0 28 12 29 29H10z" fill="#444" />
          <path d="M10 31L24 6c5 3 8 6 11 11z" fill="#777" />
          <path d="M10 31l25-14c2 4 4 8 4 14z" fill="#d8d8d8" />
          <path d="M10 2c15 0 28 12 29 29H10z" fill="none" stroke={I} strokeWidth="2" />
        </>
      ),
    },
  ],
  [
    {
      name: "견본",
      art: (
        <>
          <path d="M8 6h32v23H8z" fill={I} />
          <path d="M10 8h8v8h-8zM10 18h8v9h-8zM20 18h8v9h-8zM30 18h8v9h-8z" fill="#707070" />
          <path d="M30 8h8v8h-8z" fill="#404040" />
        </>
      ),
    },
    {
      name: "브러쉬",
      art: (
        <>
          <path d="M16 22h18v11a3 3 0 01-3 3H19a3 3 0 01-3-3z" fill={I} />
          <path d="M21 23L13 12M25 23L22 5M29 23l6-10" stroke={I} strokeWidth="3" />
          <path d="M10 14c-1-4 1-6 4-6l4 6-3 5zM18 1h7l1 9h-7zM28 14c2-6 8-6 13-2-3 3-7 5-10 5z" fill={I} />
        </>
      ),
    },
    {
      name: "심볼",
      art: <path d="M24 1c5 0 8 4 7 8-1 2-1 3-2 4 5-4 11-1 11 4 0 7-9 9-14 5 0 5 2 9 9 9v3H13v-3c7 0 9-4 9-9-5 4-14 2-14-5 0-5 6-8 11-4-4-5-2-12 5-12z" fill={I} />,
    },
  ],
  [
    { name: "획", art: <path d="M7 6h34v2H7zM7 14h34v4H7zM7 24h34v6H7z" fill={I} /> },
    {
      name: "그레이디언트",
      art: (
        <>
          <defs>
            <linearGradient id="dockGrad">
              <stop offset="0" stopColor="#2a2a2a" />
              <stop offset="1" stopColor="#efefef" />
            </linearGradient>
          </defs>
          <rect x="8" y="6" width="32" height="22" fill="url(#dockGrad)" stroke={I} strokeWidth="2" />
        </>
      ),
    },
    {
      name: "투명도",
      art: (
        <>
          <ellipse cx="18" cy="14" rx="13" ry="13" fill={I} />
          <ellipse cx="28" cy="22" rx="12" ry="12" fill="#6e6e6e" stroke={I} strokeWidth="2" />
        </>
      ),
    },
  ],
  [
    {
      name: "모양",
      on: true,
      art: (
        <>
          <circle cx="24" cy="18" r="12" fill={I} />
          <circle cx="24" cy="18" r="16" fill="none" stroke={I} strokeWidth="2.200" strokeDasharray="4 4.400" />
        </>
      ),
    },
    {
      name: "그래픽 스타일",
      art: <path d="M14 12V4h26v24H26M8 16h11v8H8zM14 24v7h11V19h-4" fill="none" stroke={I} strokeWidth="2.200" />,
    },
  ],
  [
    { name: "레이어", art: <path d="M24 0l16 11-16 11L8 11zM8 21l4-2 12 8 12-8 4 2-16 12z" fill={I} /> },
    {
      name: "에셋 내보내기",
      art: (
        <>
          <path d="M22 5H9v27h28V20" fill="none" stroke={I} strokeWidth="4" />
          <path d="M27 1h15v15h-4V9L29 18l-3-3 8-9h-7z" fill={I} />
        </>
      ),
    },
    { name: "대지", art: <path d="M14 24H6V2h20v10M14 14h26v18H14z" fill="none" stroke={I} strokeWidth="2.200" /> },
  ],
];

function Dock() {
  return (
    <aside className="flex w-[75px] shrink-0 flex-col">
      <div className="flex h-[24px] items-center justify-end bg-[#282828] pr-[11px]">
        <DoubleChevron dir="left" />
      </div>
      {dock.map((g, i) => (
        <div key={i} className="border-t-2 border-[#222] pb-[5px]">
          <div className="flex h-[19px] justify-center pt-[6px]"><Grip /></div>
          {g.map((d) => (
            <button key={d.name} aria-label={d.name} className="ml-[11px] flex h-14 w-[58px] items-center justify-center">
              <span className={d.on ? "flex h-[46px] w-[58px] items-center justify-center rounded-[5px] border-2 border-[#3f3f3f] bg-[#1f1f1f]" : "flex items-center justify-center"}>
                <svg width="48" height="36" viewBox="0 0 48 36" aria-hidden="true">{d.art}</svg>
              </span>
            </button>
          ))}
        </div>
      ))}
      <div className="h-[2px] bg-[#222]" />
    </aside>
  );
}

/* ---------- properties ---------- */

const head = "text-[22px] leading-[30px] text-[#8f8f8f]";
const lab = "text-[22px] leading-[42px] text-[#8f8f8f]";

function TextField({ id, label, value }: { id: string; label: string; value: string }) {
  return (
    <>
      <label htmlFor={id} className={lab}>{label}</label>
      <input id={id} defaultValue={value} className="h-[42px] w-[112px] rounded-[5px] border-2 border-[#3f3f3f] bg-[#262626] pl-[5px] text-[20px] text-[#dcdcdc] outline-none" />
    </>
  );
}

function More({ label, className = "" }: { label: string; className?: string }) {
  return (
    <div className={`flex h-5 items-center justify-end pr-[13px] ${className}`}>
      <button aria-label={label}><Dots /></button>
    </div>
  );
}

function Properties() {
  return (
    <aside className="flex w-[501px] shrink-0 flex-col">
      <div className="flex h-[26px] items-center justify-end border-b-2 border-[#222] bg-[#282828] pr-3">
        <DoubleChevron dir="right" />
      </div>
      <div className="flex h-[54px] bg-[#262626] text-[26px]">
        <button className="w-[83px] bg-[#323232] pl-0.5 text-[#f0f0f0]">속성</button>
        <button className="w-[155px] border-x-2 border-b-2 border-[#222] text-[#858585]">라이브러리</button>
        <div className="flex-1 border-b-2 border-[#222]" />
      </div>
      <div className="mr-6">
        <div className="h-[67px] border-b-2 border-[#2a2a2a] pl-5 pt-[18px]"><h2 className={head}>문자</h2></div>

        <section className="h-[250px] border-b-2 border-[#2a2a2a] pl-5 pt-[21px]">
          <h2 className={head}>변형</h2>
          <div className="mt-[10px] flex items-center">
            <svg width="38" height="38" viewBox="0 0 38 38" fill="none" stroke={I} strokeWidth="2.200" aria-hidden="true">
              <path d="M1.500 1.500h7.500v7.500H1.500zM15 1.500h8v7.500h-8zM29 1.500h7.500v7.500H29zM1.500 15h7.500v8H1.500zM29 15h7.500v8H29zM1.500 29h7.500v7.500H1.500zM15 29h8v7.500h-8zM29 29h7.500v7.500H29zM9 5h6M23 5h6M9 33h6M23 33h6M5 9v6M5 23v6M33 9v6M33 23v6" />
              <path d="M15 15h8v8h-8z" fill="#e0e0e0" stroke="none" />
            </svg>
            <div className="ml-[22px] grid grid-cols-[31px_112px_31px_62px_112px] gap-y-2.5">
              <TextField id="px" label="X:" value="2686.416 px" />
              <span />
              <TextField id="pw" label="폭:" value="300 px" />
              <TextField id="py" label="Y:" value="1001.478 px" />
              <span />
              <TextField id="ph" label="높이:" value="102.7998 px" />
            </div>
            <button aria-label="비율 유지" className="ml-[14px]">
              <svg width="32" height="36" viewBox="0 0 32 36" fill="none" stroke={I} strokeWidth="3" aria-hidden="true">
                <path d="M10 9V8c0-8 12-8 12 0v9M10 17v10c0 8 12 8 12 1" />
                <path d="M2 4l27 29" strokeWidth="2.600" />
              </svg>
            </button>
          </div>
          <div className="mt-2.5 flex h-[42px]">
            <svg className="ml-[50px] mt-[6px]" width="34" height="22" viewBox="0 0 34 22" fill="none" stroke={I} strokeWidth="2.600" aria-hidden="true">
              <path d="M17 1L3 17h20M13 6c4 2 5 6 4 11" />
              <path d="M28 6v3M28 15v3" strokeWidth="3" />
            </svg>
            <Combo label="회전 각도" value="0°" width="w-[112px]" />
            <button aria-label="가로로 뒤집기" className="ml-[85px]">
              <svg width="28" height="24" viewBox="0 0 28 24" aria-hidden="true">
                <path d="M2 4v16l8-8z" fill="none" stroke={I} strokeWidth="2" />
                <path d="M27 3v18l-9-9z" fill={I} />
                <path d="M14 0v24" stroke={I} strokeWidth="2" strokeDasharray="2 2" />
              </svg>
            </button>
            <button aria-label="세로로 뒤집기" className="ml-[23px]">
              <svg width="24" height="28" viewBox="0 0 24 28" aria-hidden="true">
                <path d="M3 1h18l-9 9z" fill={I} />
                <path d="M4 26h16l-8-8z" fill="none" stroke={I} strokeWidth="2" />
                <path d="M0 14h24" stroke={I} strokeWidth="2" strokeDasharray="2 2" />
              </svg>
            </button>
          </div>
          <More label="변형 추가 옵션" className="mt-3" />
        </section>

        <section className="h-[349px] border-b-2 border-[#2a2a2a] pl-5 pt-[21px]">
          <h2 className={head}>모양</h2>
          <div className="mt-[13px] grid grid-cols-[61px_113px_1fr] gap-y-4">
            <button aria-label="칠 색상" className="mt-3 h-9 w-9 border-2 border-[#1c1c1c] bg-black ring-2 ring-white ring-inset" />
            <span className="pt-[14px] text-[22px] leading-[37px] text-[#8f8f8f]">칠</span>
            <span />
            <button aria-label="획 색상" className="mt-1 flex h-9 w-9 overflow-hidden border-2 border-[#1c1c1c]">
              <svg width="32" height="32" viewBox="0 0 38 38" aria-hidden="true">
                <path d="M0 0h38v38H0z" fill="#fff" />
                <path d="M12 12h14v14H12z" fill="#323232" stroke="#222" strokeWidth="3" />
                <path d="M0 38L38 0" stroke="#e01010" strokeWidth="5" />
              </svg>
            </button>
            <span className="pt-3"><LinkLabel>획</LinkLabel></span>
            <Combo label="획 두께 값" width="w-[139px]" stepper />
            <svg className="ml-0.5 mt-1.5" width="32" height="32" viewBox="0 0 32 32" aria-hidden="true">
              <rect x="1" y="1" width="30" height="30" fill="#3a3a3a" stroke={I} strokeWidth="2" />
              <path d="M2 2h6v6H2zM16 2h6v6h-6zM8 8h8v8H8zM22 8h8v8h-8zM2 16h6v6H2zM16 16h6v6h-6zM8 22h8v8H8zM22 22h8v8h-8z" fill="#5a5a5a" />
            </svg>
            <span className="pt-3"><LinkLabel>불투명도</LinkLabel></span>
            <Combo label="불투명도 값" value="100%" width="w-[139px]" arrow="right" />
          </div>
          <button aria-label="효과" className="ml-3 mt-9 block"><FxIcon /></button>
          <More label="모양 추가 옵션" className="mt-6" />
        </section>

        <section className="h-[319px] border-b-2 border-[#2a2a2a] pl-5 pt-[22px]">
          <h2 className={head}>문자</h2>
          <div className="mt-[22px] flex flex-col gap-2.5">
            <SelectBox label="글꼴 모음" value="Adobe 명조 Std M" width="w-[440px]" search />
            <SelectBox label="글꼴 스타일 모음" value="-" width="w-[440px]" />
            <div className="flex w-[440px] items-start">
              <svg className="mr-[6px] mt-1" width="37" height="30" viewBox="0 0 37 30" fill={I} aria-hidden="true">
                <path d="M10 0h27v9h-4l-1-4h-5v19h4v4H17v-4h4V5h-6l-1 4h-4zM0 12h15v6h-3l-1-3H9v10h3v3H3v-3h3V15H3l-1 3H0z" />
              </svg>
              <Combo label="크기" value="100 pt" width="w-[163px]" stepper />
              <svg className="ml-7 mr-[6px]" width="36" height="34" viewBox="0 0 36 34" fill="none" stroke={I} strokeWidth="2.200" aria-hidden="true">
                <path d="M16 13L22 1l6 12M18 9h8M11 15h22M16 31l6-12 6 12M18 27h8M11 33h22M7 16v14M3 20l4-4 4 4M3 27l4 4 4-4" />
              </svg>
              <Combo label="행간" value="(120 pt)" width="w-[164px]" stepper />
            </div>
            <div className="flex w-[440px] items-start">
              <svg className="mr-[6px]" width="37" height="38" viewBox="0 0 37 38" fill="none" stroke={I} strokeWidth="2.800" aria-hidden="true">
                <path d="M1 5l6 17L14 5M10 25L22 2M17 23l8-18 8 18M20 16h10" />
                <path d="M34 30H22" strokeWidth="2" />
                <path d="M18 30l7-5v10z" fill={I} stroke="none" />
              </svg>
              <Combo label="커닝" value="(0)" width="w-[163px]" stepper />
              <svg className="ml-[27px] mr-[7px]" width="36" height="36" viewBox="0 0 36 36" aria-hidden="true">
                <path d="M0 1h36v22H0z" fill={I} />
                <path d="M5 4l6 15L18 4M18 20l7-15 7 15M20 15h9" fill="none" stroke="#323232" strokeWidth="3.200" />
                <path d="M3 30h30" stroke={I} strokeWidth="2" />
                <path d="M0 30l6-5v10zM36 30l-6-5v10z" fill={I} />
              </svg>
              <Combo label="자간" value="0" width="w-[164px]" stepper />
            </div>
          </div>
          <More label="문자 추가 옵션" className="mt-4" />
        </section>

        <section className="h-[172px] border-b-2 border-[#2a2a2a] pl-5 pt-[22px]">
          <h2 className={head}>단락</h2>
          <div className="mt-5 flex gap-2.5">
            {(Object.keys(alignLines) as AlignKind[]).map((k, i) => (
              <button key={k} aria-label={`단락 정렬 ${i + 1}`} className={i === 0 ? "flex h-[52px] w-[52px] items-center justify-center rounded-[5px] border-2 border-[#3f3f3f] bg-[#1f1f1f]" : "flex h-[52px] w-[52px] items-center justify-center"}>
                <AlignIcon kind={k} color={i === 0 ? "#fff" : I} />
              </button>
            ))}
          </div>
          <More label="단락 추가 옵션" className="mt-4" />
        </section>

        <section className="pl-5 pt-[31px]">
          <h2 className={head}>빠른 작업</h2>
          <div className="mr-[3px] mt-[22px] flex gap-5 text-[22px] text-[#c8c8c8]">
            <button className="h-[42px] flex-1 rounded-[5px] border-2 border-[#505050] leading-[36px]">윤곽선 만들기</button>
            <button className="h-[42px] flex-1 rounded-[5px] border-2 border-[#505050] leading-[36px]">정돈</button>
          </div>
        </section>
      </div>
    </aside>
  );
}

export default function App() {
  return (
    <div className="flex h-screen flex-col overflow-hidden bg-white font-['Open_Sans','Noto_Sans_CJK_KR',sans-serif]">
      <div className="mr-[13px] flex min-h-0 flex-1 flex-col bg-[#323232]">
        <MenuBar />
        <ControlBar />
        <div className="flex min-h-0 flex-1 border-b-2 border-[#1f1f1f]">
          <ToolPanel />
          <div className="w-[5px] shrink-0 bg-[#232323]" />
          <DocumentArea />
          <div className="w-1 shrink-0 bg-[#222]" />
          <Dock />
          <div className="w-[6px] shrink-0 bg-[#232323]" />
          <Properties />
        </div>
      </div>
      <div className="mr-[13px] flex h-3 shrink-0 bg-[#203142] pl-24">
        <div className="w-[688px] border-t-2 border-[#bcbcc0] bg-[#f0f0f0]" />
        <div className="ml-[200px] w-24 bg-[#4d5a68]" />
      </div>
    </div>
  );
}
